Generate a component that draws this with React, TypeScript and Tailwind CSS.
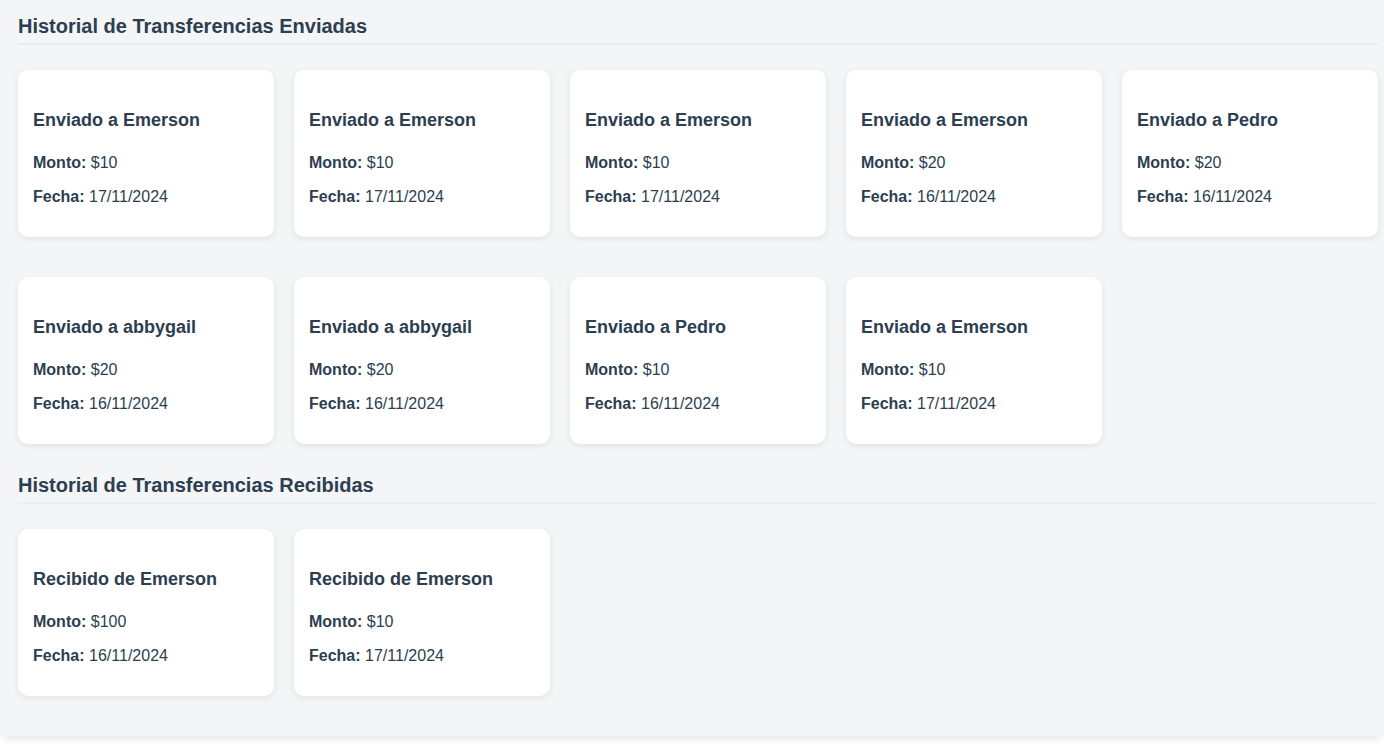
type Transfer = {
  title: string;
  amount: string;
  date: string;
};

const sent: Transfer[] = [
  { title: "Enviado a Emerson", amount: "$10", date: "17/11/2024" },
  { title: "Enviado a Emerson", amount: "$10", date: "17/11/2024" },
  { title: "Enviado a Emerson", amount: "$10", date: "17/11/2024" },
  { title: "Enviado a Emerson", amount: "$20", date: "16/11/2024" },
  { title: "Enviado a Pedro", amount: "$20", date: "16/11/2024" },
  { title: "Enviado a abbygail", amount: "$20", date: "16/11/2024" },
  { title: "Enviado a abbygail", amount: "$20", date: "16/11/2024" },
  { title: "Enviado a Pedro", amount: "$10", date: "16/11/2024" },
  { title: "Enviado a Emerson", amount: "$10", date: "17/11/2024" },
];

const received: Transfer[] = [
  { title: "Recibido de Emerson", amount: "$100", date: "16/11/2024" },
  { title: "Recibido de Emerson", amount: "$10", date: "17/11/2024" },
];

function TransferCard({ title, amount, date }: Transfer) {
  return (
    <div className="h-[167px] rounded-[10px] bg-white px-[15px] pt-[39px] shadow-[0_2px_6px_rgba(0,0,0,0.08)]">
      <h3 className="text-[18px] font-bold leading-[22px] text-[#2c3e50]">{title}</h3>
      <p className="mt-[22px] text-[16px] leading-[20px] text-[#2c3e50]">
        <span className="font-bold">Monto:</span> {amount}
      </p>
      <p className="mt-[14px] text-[16px] leading-[20px] text-[#2c3e50]">
        <span className="font-bold">Fecha:</span> {date}
      </p>
    </div>
  );
}

function SectionTitle({ children, className = "" }: { children: string; className?: string }) {
  return (
    <h2
      className={`border-b-2 border-[#e7eeef] pb-[5px] text-[20px] font-bold leading-[24px] text-[#2c3e50] ${className}`}
    >
      {children}
    </h2>
  );
}

export default function App() {
  return (
    <div className="min-h-[744px] bg-white font-['Liberation_Sans',Arial,sans-serif]">
      <div className="rounded-b-[10px] bg-[#f4f5f7] pb-[40px] pl-[18px] pr-[6px] pt-[14px] shadow-[0_3px_8px_rgba(0,0,0,0.1)]">
        <SectionTitle>Historial de Transferencias Enviadas</SectionTitle>
        <div className="mt-[25px] grid grid-cols-5 gap-x-[20px] gap-y-[40px]">
          {sent.map((t, i) => (
            <TransferCard key={i} {...t} />
          ))}
        </div>

        <SectionTitle className="mt-[29px]">Historial de Transferencias Recibidas</SectionTitle>
        <div className="mt-[25px] grid grid-cols-5 gap-x-[20px] gap-y-[40px]">
          {received.map((t, i) => (
            <TransferCard key={i} {...t} />
          ))}
        </div>
      </div>
    </div>
  );
}
